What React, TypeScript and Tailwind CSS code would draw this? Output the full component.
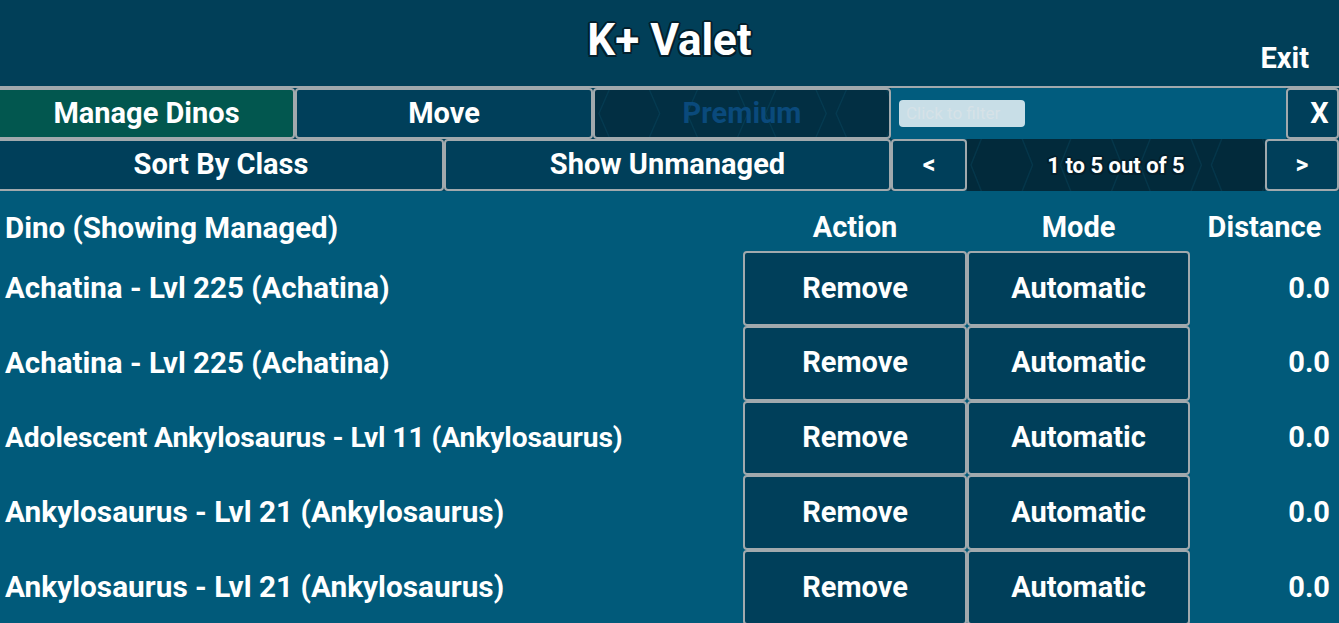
import React from "react";

// each row keeps the size the game fitted it to
const dinos = [
  { name: "Achatina - Lvl 225 (Achatina)", cls: "text-[29.5px]" },
  { name: "Achatina - Lvl 225 (Achatina)", cls: "text-[29.5px]" },
  { name: "Adolescent Ankylosaurus - Lvl 11 (Ankylosaurus)", cls: "text-[28.2px] tracking-[-0.1px]" },
  { name: "Ankylosaurus - Lvl 21 (Ankylosaurus)", cls: "text-[29.8px]" },
  { name: "Ankylosaurus - Lvl 21 (Ankylosaurus)", cls: "text-[29.8px]" },
];

const outline =
  "[text-shadow:2px_0_0_#03202d,-2px_0_0_#03202d,0_2px_0_#03202d,0_-2px_0_#03202d,1.5px_1.5px_0_#03202d,-1.5px_1.5px_0_#03202d,1.5px_-1.5px_0_#03202d,-1.5px_-1.5px_0_#03202d]";

// faint honeycomb texture behind the disabled / info panels
const Hexes = () => (
  <svg className="absolute inset-0 h-full w-full" preserveAspectRatio="none" viewBox="0 0 300 52">
    <g fill="none" stroke="#0e5a76" strokeOpacity="0.25" strokeWidth="1.5">
      <path d="M20 -14 L50 -14 L66 26 L50 66 L20 66 L4 26 Z" />
      <path d="M110 -14 L140 -14 L156 26 L140 66 L110 66 L94 26 Z" />
      <path d="M190 -14 L220 -14 L236 26 L220 66 L190 66 L174 26 Z" />
      <path d="M262 -14 L292 -14 L308 26 L292 66 L262 66 L246 26 Z" />
    </g>
  </svg>
);

const Btn = ({
  children,
  className = "",
}: {
  children: React.ReactNode;
  className?: string;
}) => (
  <div
    className={
      "flex items-center justify-center rounded-[4px] border-2 border-[#a1a9ad] font-bold " + className
    }
  >
    {children}
  </div>
);

const App = () => {
  return (
    <div className="h-[623px] w-[1339px] overflow-hidden bg-[#015a7a] font-['Roboto','Liberation_Sans',sans-serif] text-white">
      {/* Header */}
      <div className="grid h-[86px] grid-cols-[1fr_auto_1fr] bg-[#013f58]">
        <div />
        <div className={"pt-[18px] text-[44px] font-bold leading-none " + outline}>K+ Valet</div>
        <div className="flex items-end justify-end pb-[6px] pr-[30px] text-[29px] font-bold">Exit</div>
      </div>

      {/* Tabs + filter */}
      <div className="flex h-[53px] border-t-2 border-[#a1a9ad] bg-[#013f58] text-[29px]">
        <Btn className="w-[295px] rounded-l-none border-l-0 bg-[#02574f]">Manage Dinos</Btn>
        <Btn className="w-[298px] bg-[#003f5a]">Move</Btn>
        <Btn className="relative w-[298px] overflow-hidden bg-[#022f43] text-[#0a4a7c]">
          <Hexes />
          <span className="relative">Premium</span>
        </Btn>
        <div className="flex w-[395px] items-center bg-[#015c7e] pl-[8px]">
          <div className="flex h-[27px] w-[126px] items-center rounded-[4px] bg-[#c8dee7] pl-[7px] text-[17px] text-[#d6e2e7]">
            Click to filter
          </div>
        </div>
        <Btn className="flex-1 bg-[#003f5a] pl-[14px]">X</Btn>
      </div>

      {/* Sort / paging */}
      <div className="flex h-[52px] bg-[#013f58] text-[29px]">
        <Btn className="w-[444px] rounded-l-none border-l-0 bg-[#003f5a]">Sort By Class</Btn>
        <Btn className="w-[447px] bg-[#003f5a]">Show Unmanaged</Btn>
        <Btn className="w-[76px] bg-[#003f5a] text-[25px]">&lt;</Btn>
        <div className="relative flex w-[298px] items-center justify-center overflow-hidden bg-[#022a3b]">
          <Hexes />
          <span className={"relative text-[22px] font-bold " + outline}>1 to 5 out of 5</span>
        </div>
        <Btn className="flex-1 bg-[#003f5a] text-[25px]">&gt;</Btn>
      </div>

      {/* List */}
      <div className="grid grid-cols-[743px_224px_223px_1fr] font-bold">
        <div className="flex h-[60px] items-center pl-[5px] pt-[14px] text-[29.5px]">Dino (Showing Managed)</div>
        <div className="flex h-[60px] items-center justify-center pt-[14px] text-[29px]">Action</div>
        <div className="flex h-[60px] items-center justify-center pt-[14px] text-[29px]">Mode</div>
        <div className="flex h-[60px] items-center justify-center pt-[14px] text-[29px]">Distance</div>
        {dinos.map((d, i) => (
          <React.Fragment key={i}>
            <div className={"flex h-[74.75px] items-center pl-[5px] " + d.cls}>{d.name}</div>
            <Btn className="h-[74.75px] bg-[#003f5a] text-[29px]">Remove</Btn>
            <Btn className="h-[74.75px] bg-[#003f5a] text-[29px]">Automatic</Btn>
            <div className="flex h-[74.75px] items-center justify-end pr-[9px] text-[29px]">0.0</div>
          </React.Fragment>
        ))}
      </div>
    </div>
  );
};

export default App;
